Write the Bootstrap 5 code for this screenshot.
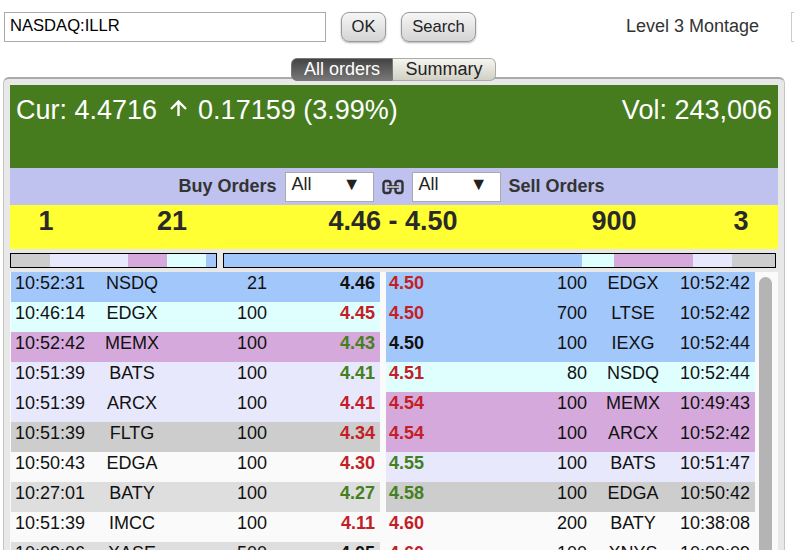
<!DOCTYPE html>
<html lang="en">
<head>
<meta charset="UTF-8">
<title>Level 3 Montage</title>
<link href="https://cdn.jsdelivr.net/npm/bootstrap@5.3.0/dist/css/bootstrap.min.css" rel="stylesheet">
<style>
html, body { height: 550px; overflow: hidden; }
body { font-family: "Liberation Sans", Arial, sans-serif; color: #212529; background: #fff; }
.top-bar { height: 54px; padding: 12px 0 0 4px; }
.top-bar > * { flex-shrink: 0; }
.sym-input { width: 322px; height: 30px; border: 1px solid #aaa; padding: 0 5px 2px; font-size: 16.6px; color: #000; font-family: inherit; border-radius: 0; outline: 0; }
.gray-btn { height: 30px; border: 1px solid #999; border-radius: 8px; background: linear-gradient(#f6f6f6, #d4d4d4); box-shadow: 0 1px 2px rgba(0,0,0,.3); font-size: 16.6px; color: #222; padding: 0; line-height: 28px; margin-left: 15px; }
.ok-btn { width: 45px; }
.search-btn { width: 75px; }
.montage { margin-left: 150px; font-size: 18px; color: #333; line-height: 28px; white-space: nowrap; }
.edge-box { width: 10px; height: 30px; border: 1px solid #ccc; border-right: 0; margin-left: 32px; }
.tabs { position: absolute; top: 58px; left: 291px; z-index: 2; font-size: 18px; line-height: 21px; height: 23px; }
.tab-on { background: linear-gradient(#444, #777); color: #fff; border: 1px solid #777; border-radius: 6px 0 0 6px; width: 102px; text-align: center; }
.tab-off { background: linear-gradient(#f6f6f0, #d0d0c4); color: #222; border: 1px solid #aaa; border-left: 0; border-radius: 0 6px 6px 0; width: 103px; text-align: center; }
.panel { margin: 23px 0 0 3px; width: 782px; height: 480px; background: #e8e8e8; border: 1px solid #c4c4c4; border-top: 2px solid #aaa; border-radius: 6px 6px 0 0; padding: 6px 6px 0; }
.quote { height: 83px; background: #467c1e; color: #fff; font-size: 27px; line-height: 30px; padding: 10px 6px 0; }
.quote svg { margin: -8px 3px 0 4px; }
.filters { height: 37px; background: #bfc1ee; font-size: 18px; font-weight: 700; color: #333; gap: 8px; padding-right: 5px; }
.drop { width: 89px; height: 30px; background: #fff; border: 1px solid #aaa; font-weight: 400; color: #222; padding: 0 12px 3px 6px; line-height: 22px; font-size: 18px; margin-top: 1px; }
.inside { height: 44px; background: #ffff33; font-size: 27px; line-height: 30px; font-weight: 700; color: #2a2a2a; padding-top: 1px; }
.inside div { text-align: center; }
.ins-a { width: 72px; }
.ins-b { width: 180px; }
.ins-c { width: 262px; }
.ins-d { width: 180px; }
.ins-e { width: 74px; }
.depth { gap: 6px; margin-top: 4px; height: 15px; }
.depth-bar { height: 15px; border: 1px solid #000; background: #fff; }
.depth-bar div { height: 100%; }
.book { margin-top: 4px; height: 300px; overflow: hidden; background: #fafafa; padding-left: 1px; }
.side { font-size: 18px; color: #111; width: 369px; }
.side.sell { margin-left: 6px; }
.rw { height: 30px; line-height: 22px; padding: 0 5px 0 4px; }
.rw > span { display: block; }
.t { width: 88px; }
.buy .x { width: 58px; text-align: center; }
.buy .q { width: 106px; text-align: right; }
.buy .p { flex: 1; text-align: right; font-weight: 700; }
.sell .rw { padding-left: 3px; }
.sell .p { width: 50px; font-weight: 700; }
.sell .q { width: 148px; text-align: right; }
.sell .x { width: 92px; text-align: center; }
.sell .t { flex: 1; text-align: right; width: auto; }
.c-a { background: #a2c7fb; }
.c-b { background: #dfffff; }
.c-c { background: #d6a9dc; }
.c-d { background: #e8e8fc; }
.c-e { background: #cdcdcd; }
.c-f { background: #fafafa; }
.c-g { background: #dedede; }
.up { color: #44801e; }
.dn { color: #c32026; }
.blk { color: #111; }
.track { width: 22px; padding: 5px 5px 0 4px; }
.thumb { height: 290px; background: #b4b4b4; border-radius: 7px 7px 0 0; }
</style>
</head>
<body>
<div class="top-bar d-flex align-items-start">
  <input class="sym-input" type="text" value="NASDAQ:ILLR">
  <button class="gray-btn ok-btn" type="button">OK</button>
  <button class="gray-btn search-btn" type="button">Search</button>
  <div class="montage">Level 3 Montage</div>
  <div class="edge-box"></div>
</div>
<div class="tabs d-flex">
  <div class="tab-on">All orders</div>
  <div class="tab-off">Summary</div>
</div>
<div class="panel">
  <div class="quote d-flex justify-content-between">
    <div>Cur: 4.4716 <svg width="19" height="16" viewBox="0 0 19 16"><path d="M9.500 16V2M2 9l7.500-7.500L17 9" fill="none" stroke="#fff" stroke-width="2.400"/></svg> 0.17159 (3.99%)</div>
    <div>Vol: 243,006</div>
  </div>
  <div class="filters d-flex align-items-center justify-content-center">
    <span>Buy Orders</span>
    <div class="drop d-flex justify-content-between"><span>All</span><span>▼</span></div>
    <svg width="22" height="16" viewBox="0 0 22 16"><g fill="none"><rect x="1.500" y="2" width="7" height="12" rx="2.500" stroke="#333" stroke-width="2.400"/><rect x="13.500" y="2" width="7" height="12" rx="2.500" stroke="#333" stroke-width="2.400"/><path d="M5 8h12" stroke="#333" stroke-width="3.600"/><path d="M5 8h12" stroke="#e8e8e8" stroke-width="1.400"/></g></svg>
    <div class="drop d-flex justify-content-between"><span>All</span><span>▼</span></div>
    <span>Sell Orders</span>
  </div>
  <div class="inside d-flex">
    <div class="ins-a">1</div>
    <div class="ins-b">21</div>
    <div class="ins-c">4.46 - 4.50</div>
    <div class="ins-d">900</div>
    <div class="ins-e">3</div>
  </div>
  <div class="depth d-flex">
    <div class="depth-bar d-flex" style="width:207px">
      <div class="c-e" style="width:39px"></div><div class="c-d" style="width:78px"></div><div class="c-c" style="width:39px"></div><div class="c-b" style="width:39px"></div><div class="c-a" style="flex:1"></div>
    </div>
    <div class="depth-bar d-flex" style="width:553px">
      <div class="c-a" style="width:358px"></div><div class="c-b" style="width:32px"></div><div class="c-c" style="width:79px"></div><div class="c-d" style="width:39px"></div><div class="c-e" style="flex:1"></div>
    </div>
  </div>
  <div class="book d-flex">
    <div class="side buy" id="buy"></div>
    <div class="side sell" id="sell"></div>
    <div class="track"><div class="thumb"></div></div>
  </div>
</div>
<script>
// rows: time, venue, size, price, price colour, row colour
var buyRows = [
  ['10:52:31','NSDQ','21','4.46','blk','a'],
  ['10:46:14','EDGX','100','4.45','dn','b'],
  ['10:52:42','MEMX','100','4.43','up','c'],
  ['10:51:39','BATS','100','4.41','up','d'],
  ['10:51:39','ARCX','100','4.41','dn','d'],
  ['10:51:39','FLTG','100','4.34','dn','e'],
  ['10:50:43','EDGA','100','4.30','dn','f'],
  ['10:27:01','BATY','100','4.27','up','g'],
  ['10:51:39','IMCC','100','4.11','dn','f'],
  ['10:09:06','XASE','500','4.05','blk','g']
];
var sellRows = [
  ['4.50','dn','100','EDGX','10:52:42','a'],
  ['4.50','dn','700','LTSE','10:52:42','a'],
  ['4.50','blk','100','IEXG','10:52:44','a'],
  ['4.51','dn','80','NSDQ','10:52:44','b'],
  ['4.54','dn','100','MEMX','10:49:43','c'],
  ['4.54','dn','100','ARCX','10:52:42','c'],
  ['4.55','up','100','BATS','10:51:47','d'],
  ['4.58','up','100','EDGA','10:50:42','e'],
  ['4.60','dn','200','BATY','10:38:08','f'],
  ['4.60','dn','100','XNYS','10:09:09','f']
];
document.getElementById('buy').innerHTML = buyRows.map(function (r) {
  return '<div class="rw d-flex c-' + r[5] + '"><span class="t">' + r[0] + '</span><span class="x">' + r[1] + '</span><span class="q">' + r[2] + '</span><span class="p ' + r[4] + '">' + r[3] + '</span></div>';
}).join('');
document.getElementById('sell').innerHTML = sellRows.map(function (r) {
  return '<div class="rw d-flex c-' + r[5] + '"><span class="p ' + r[1] + '">' + r[0] + '</span><span class="q">' + r[2] + '</span><span class="x">' + r[3] + '</span><span class="t">' + r[4] + '</span></div>';
}).join('');
</script>
<script src="https://cdn.jsdelivr.net/npm/bootstrap@5.3.0/dist/js/bootstrap.bundle.min.js"></script>
</body>
</html>
